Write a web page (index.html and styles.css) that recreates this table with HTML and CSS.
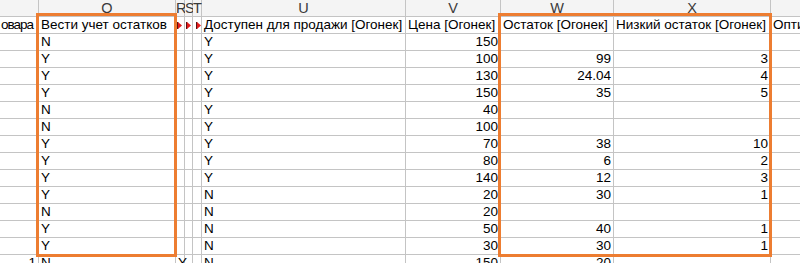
FILE: index.html
```html
<!DOCTYPE html>
<html>
<head>
<meta charset="utf-8">
<link rel="stylesheet" href="styles.css">
</head>
<body>
<div class="wrap">
  <div class="sheet">
    <div class="ch"></div><div class="ch">O</div><div class="ch ch-s">R</div><div class="ch ch-s">S</div><div class="ch ch-s">T</div><div class="ch">U</div><div class="ch">V</div><div class="ch">W</div><div class="ch">X</div><div class="ch"></div>

    <div class="c first">овара</div><div class="c">Вести учет остатков</div>
    <div class="c mk"><svg width="5" height="7" viewBox="0 0 5 7"><rect width="1.2" height="7" fill="#5a1010"/><polygon points="1,0 5,3.5 1,7" fill="#e31b1b"/></svg></div>
    <div class="c mk"><svg width="5" height="7" viewBox="0 0 5 7"><rect width="1.2" height="7" fill="#5a1010"/><polygon points="1,0 5,3.5 1,7" fill="#e31b1b"/></svg></div>
    <div class="c mk mk-r"><svg width="5" height="7" viewBox="0 0 5 7"><rect width="1.2" height="7" fill="#5a1010"/><polygon points="1,0 5,3.5 1,7" fill="#e31b1b"/></svg></div>
    <div class="c">Доступен для продажи [Огонек]</div><div class="c">Цена [Огонек]</div><div class="c">Остаток [Огонек]</div><div class="c">Низкий остаток [Огонек]</div><div class="c">Опти</div>

    <div class="c"></div><div class="c">N</div><div class="c"></div><div class="c"></div><div class="c"></div><div class="c">Y</div><div class="c n">150</div><div class="c n"></div><div class="c n"></div><div class="c"></div>
    <div class="c"></div><div class="c">Y</div><div class="c"></div><div class="c"></div><div class="c"></div><div class="c">Y</div><div class="c n">100</div><div class="c n">99</div><div class="c n">3</div><div class="c"></div>
    <div class="c"></div><div class="c">Y</div><div class="c"></div><div class="c"></div><div class="c"></div><div class="c">Y</div><div class="c n">130</div><div class="c n">24.04</div><div class="c n">4</div><div class="c"></div>
    <div class="c"></div><div class="c">Y</div><div class="c"></div><div class="c"></div><div class="c"></div><div class="c">Y</div><div class="c n">150</div><div class="c n">35</div><div class="c n">5</div><div class="c"></div>
    <div class="c"></div><div class="c">N</div><div class="c"></div><div class="c"></div><div class="c"></div><div class="c">Y</div><div class="c n">40</div><div class="c n"></div><div class="c n"></div><div class="c"></div>
    <div class="c"></div><div class="c">N</div><div class="c"></div><div class="c"></div><div class="c"></div><div class="c">Y</div><div class="c n">100</div><div class="c n"></div><div class="c n"></div><div class="c"></div>
    <div class="c"></div><div class="c">Y</div><div class="c"></div><div class="c"></div><div class="c"></div><div class="c">Y</div><div class="c n">70</div><div class="c n">38</div><div class="c n">10</div><div class="c"></div>
    <div class="c"></div><div class="c">Y</div><div class="c"></div><div class="c"></div><div class="c"></div><div class="c">Y</div><div class="c n">80</div><div class="c n">6</div><div class="c n">2</div><div class="c"></div>
    <div class="c"></div><div class="c">Y</div><div class="c"></div><div class="c"></div><div class="c"></div><div class="c">Y</div><div class="c n">140</div><div class="c n">12</div><div class="c n">3</div><div class="c"></div>
    <div class="c"></div><div class="c">Y</div><div class="c"></div><div class="c"></div><div class="c"></div><div class="c">N</div><div class="c n">20</div><div class="c n">30</div><div class="c n">1</div><div class="c"></div>
    <div class="c"></div><div class="c">N</div><div class="c"></div><div class="c"></div><div class="c"></div><div class="c">N</div><div class="c n">20</div><div class="c n"></div><div class="c n"></div><div class="c"></div>
    <div class="c"></div><div class="c">Y</div><div class="c"></div><div class="c"></div><div class="c"></div><div class="c">N</div><div class="c n">50</div><div class="c n">40</div><div class="c n">1</div><div class="c"></div>
    <div class="c"></div><div class="c">Y</div><div class="c"></div><div class="c"></div><div class="c"></div><div class="c">N</div><div class="c n">30</div><div class="c n">30</div><div class="c n">1</div><div class="c"></div>
    <div class="c n">1</div><div class="c">N</div><div class="c">Y</div><div class="c"></div><div class="c"></div><div class="c">N</div><div class="c n">150</div><div class="c n">20</div><div class="c n"></div><div class="c"></div>
  </div>
  <div class="hl hl-a"></div>
  <div class="hl hl-b"></div>
</div>
</body>
</html>
```

FILE: styles.css
```css
html, body {
  margin: 0;
  padding: 0;
  background: #fff;
  overflow: hidden;
}
.wrap {
  position: relative;
  width: 800px;
  height: 263px;
  overflow: hidden;
}
.sheet {
  display: grid;
  grid-template-columns: 39px 137px 9px 8px 9px 204px 95px 113px 157px 60px;
  grid-auto-rows: 17px;
  font-family: "Liberation Sans", Arial, sans-serif;
  font-size: 13.5px;
  line-height: 16px;
  color: #000;
}
.ch {
  box-sizing: border-box;
  border-right: 1px solid #c4c4c4;
  border-bottom: 1px solid #c4c4c4;
  background: #f4f4f4;
  text-align: center;
  color: #3a3a3a;
  font-size: 14.5px;
  line-height: 16px;
  overflow: visible;
  white-space: nowrap;
}
.ch-s {
  text-align: left;
  padding-left: 0;
  letter-spacing: -0.5px;
}
.c {
  box-sizing: border-box;
  border-right: 1px solid #c4c4c4;
  border-bottom: 1px solid #c4c4c4;
  padding: 0 2px;
  white-space: nowrap;
  overflow: visible;
}
.c.first {
  padding-left: 1px;
  overflow: hidden;
  letter-spacing: -1px;
}
.c.n {
  text-align: right;
}
.mk {
  padding: 5px 0 0 1px;
  line-height: 0;
}
.mk-r {
  padding-left: 3px;
}
.hl {
  position: absolute;
  box-sizing: border-box;
  border: 3px solid #ed7d31;
  top: 13px;
  height: 244px;
}
.hl-a {
  left: 36px;
  width: 141px;
}
.hl-b {
  left: 498px;
  width: 274px;
}
```
